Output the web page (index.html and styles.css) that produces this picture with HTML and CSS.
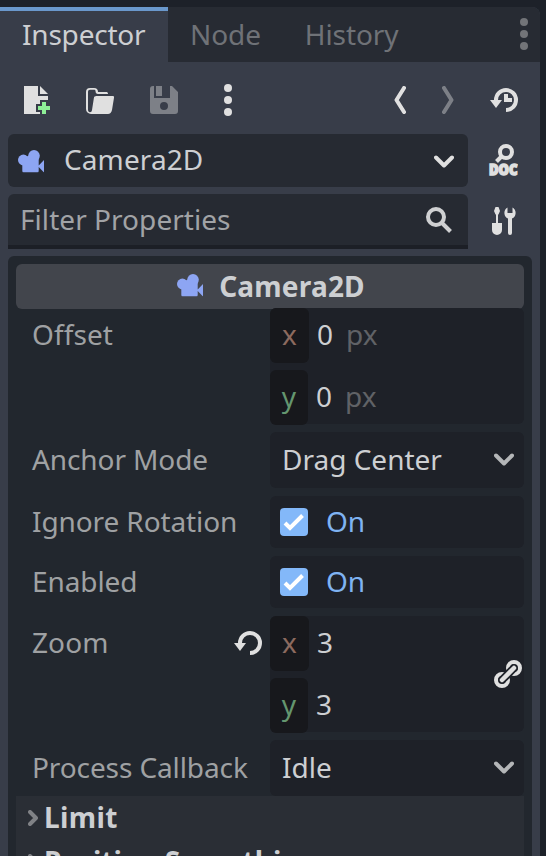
FILE: index.html
```
<!DOCTYPE html>
<html lang="en">
<head>
<meta charset="utf-8">
<title>Inspector</title>
<link rel="stylesheet" href="styles.css">
</head>
<body>
<svg width="0" height="0" class="defs">
  <symbol id="camera" viewBox="0 0 26 22.500"><circle cx="5.400" cy="10" r="5.400"/><circle cx="16" cy="5.800" r="5.800"/><path d="M4.300 9L12 5h8.700v16a1.500 1.500 0 0 1-1.500 1.500H5.800A1.500 1.500 0 0 1 4.300 21zM20 16.300l6-6.300v12.500z"/></symbol>
  <symbol id="down" viewBox="0 0 20 14"><path d="M2 2.500l8 8 8-8" class="line"/></symbol>
  <symbol id="right" viewBox="0 0 10 16"><path d="M2 2l6 6-6 6" class="line"/></symbol>
  <symbol id="dots" viewBox="0 0 8 32"><circle cx="4" cy="4" r="4"/><circle cx="4" cy="16" r="4"/><circle cx="4" cy="28" r="4"/></symbol>
  <symbol id="check" viewBox="0 0 28 28"><path d="M5 15l5 5L22.500 7.500" fill="none" stroke="#fff" stroke-width="4"/></symbol>
</svg>
<div class="dock">
  <nav class="tabs">
    <div class="tab active">Inspector</div>
    <div class="tab">Node</div>
    <div class="tab">History</div>
    <svg class="tab-menu" width="8" height="32"><use href="#dots"/></svg>
  </nav>
  <div class="toolbar">
    <svg width="32" height="32" viewBox="0 0 16 16"><path d="M2 1v14h8v-1H8v-4h2V8h4V6H9V1zM10 1v4h4z"/><path d="M11 9h2v2h2v2h-2v2h-2v-2H9v-2h2z" fill="#8eef97"/></svg>
    <svg width="32" height="32" viewBox="0 0 16 16"><path d="M3 2a2 2 0 0 0-2 2v8.500A2.500 2.500 0 0 0 3.500 15H12c1 0 1.700-.6 2-2l1-6.100c.1-.6-.1-.9-.7-.9H6.300c-.9 0-1.300.4-1.400 1.200L4 13c-.1.800-.5 1.100-1 1.100-.6 0-1-.5-1-1.100V4c0-.7.4-1.100 1-1.100h2c.6 0 .8.3.8.9 0 .8.400 1.200 1.200 1.200h5c0-.7-.3-1-1-1H7c0-1.300-.7-2-2-2z"/></svg>
    <svg class="off" width="32" height="32" viewBox="0 0 16 16"><path fill-rule="evenodd" d="M2.500 1H3v6h8V1h1l3 3v9.500a1.500 1.500 0 0 1-1.500 1.500h-11A1.500 1.500 0 0 1 1 13.500v-11A1.500 1.500 0 0 1 2.500 1zM4 1h3v5H4zM8 9a2 2 0 1 0 0 4 2 2 0 0 0 0-4z"/></svg>
    <svg class="menu" width="8" height="32"><use href="#dots"/></svg>
    <svg class="back" width="12" height="28" viewBox="0 0 12 28"><path class="line" d="M10 2L2.500 14 10 26"/></svg>
    <svg class="next" width="12" height="28" viewBox="0 0 12 28"><path class="line" d="M2 2l7.500 12L2 26"/></svg>
    <svg width="28" height="24" viewBox="0 0 28 24"><path d="M16 22A10 10 0 1 0 6 12" fill="none" stroke="#e0e0e0" stroke-width="4"/><path d="M0 12h12l-6 8zM14 6h4v4h4v4h-8z"/></svg>
  </div>
  <div class="object-row">
    <div class="box object">
      <svg class="cam" width="26" height="22.500"><use href="#camera"/></svg>
      <span>Camera2D</span>
      <svg class="end" width="20" height="14"><use href="#down"/></svg>
    </div>
    <svg class="side" width="30" height="40" viewBox="0 -3 30 40"><circle cx="18" cy="8" r="6" fill="none" stroke="#e0e0e0" stroke-width="4"/><path d="M13.500 12.500L8.500 17.500" fill="none" stroke="#e0e0e0" stroke-width="4"/><text x="1" y="31" textLength="28.500" lengthAdjust="spacingAndGlyphs" class="doc">DOC</text></svg>
  </div>
  <div class="object-row filter-row">
    <div class="box filter">
      <span>Filter Properties</span>
      <svg class="end" width="28" height="28" viewBox="0 0 28 28"><circle cx="11" cy="11" r="8" fill="none" stroke="#cfd0d2" stroke-width="4"/><path d="M17 17l8.500 8.500" fill="none" stroke="#cfd0d2" stroke-width="4"/></svg>
    </div>
    <svg class="side tools" width="24" height="28" viewBox="0 0 24 28"><path d="M3.500 0h3L8 4 6.500 7.500H6V16h4v7a5 5 0 0 1-10 0v-7h4V7.500h-.5L2 4zM15.500.5V6h5V.5A6.200 6.200 0 0 1 20 11.500V26a2 2 0 0 1-4 0V11.500A6.200 6.200 0 0 1 15.500.5z"/></svg>
  </div>
  <main class="properties">
    <div class="category"><svg class="cam" width="26" height="22.500"><use href="#camera"/></svg><span>Camera2D</span></div>
    <div class="prop vector first">
      <label>Offset</label>
      <div class="field">
        <div class="axis"><b class="x">x</b><span>0</span><i>px</i></div>
        <div class="axis"><b class="y">y</b><span>0</span><i>px</i></div>
      </div>
    </div>
    <div class="prop">
      <label>Anchor Mode</label>
      <div class="field select"><span>Drag Center</span><svg class="end dim" width="20" height="14"><use href="#down"/></svg></div>
    </div>
    <div class="prop">
      <label>Ignore Rotation</label>
      <div class="field toggle"><svg class="checkbox" width="28" height="28"><use href="#check"/></svg><span>On</span></div>
    </div>
    <div class="prop">
      <label>Enabled</label>
      <div class="field toggle"><svg class="checkbox" width="28" height="28"><use href="#check"/></svg><span>On</span></div>
    </div>
    <div class="prop vector">
      <label>Zoom <svg class="revert" width="28" height="24" viewBox="0 0 28 24"><path d="M16 22A10 10 0 1 0 6 12" fill="none" stroke="#e0e0e0" stroke-width="4"/><path d="M0 12h12l-6 8z"/></svg></label>
      <div class="field linked">
        <div>
          <div class="axis"><b class="x">x</b><span>3</span></div>
          <div class="axis"><b class="y">y</b><span>3</span></div>
        </div>
        <svg class="link" width="28" height="28" viewBox="0 0 28 28"><g fill="none" stroke="#e0e0e0"><circle cx="20" cy="8" r="6" stroke-width="4"/><circle cx="8" cy="20" r="6" stroke-width="4"/><path d="M8.500 19.500l11-11" stroke="#1e2128" stroke-width="8" stroke-linecap="round"/><path d="M8 20L20 8" stroke-width="4.500" stroke-linecap="round"/></g></svg>
      </div>
    </div>
    <div class="prop">
      <label>Process Callback</label>
      <div class="field select"><span>Idle</span><svg class="end dim" width="20" height="14"><use href="#down"/></svg></div>
    </div>
    <div class="sections">
      <div class="section"><svg width="10" height="16"><use href="#right"/></svg><span class="short">Limit</span></div>
      <div class="section"><svg width="10" height="16"><use href="#right"/></svg><span>Position Smoothing</span></div>
    </div>
  </main>
</div>
</body>
</html>
```

FILE: styles.css
```
* { box-sizing: border-box; }
body {
  margin: 0;
  height: 856px;
  overflow: hidden;
  background: #1d2129;
  font: 28px/44px "Noto Sans", sans-serif;
  color: #cdcfd2;
}
.defs { display: none; }
svg { display: block; flex: none; fill: #e0e0e0; }
.line { fill: none; stroke: currentColor; stroke-width: 4; stroke-linecap: round; stroke-linejoin: round; }
.dock {
  width: 540px;
  height: 849px;
  margin-top: 7px;
  background: #383d49;
  border-top-right-radius: 8px;
  overflow: hidden;
}
.tabs { display: flex; height: 55px; background: #272b33; }
.tab { padding: 5px 22px 0; color: #6f7277; letter-spacing: -0.1px; }
.tab.active { width: 168px; padding-top: 1px; border-top: 4px solid #6a98cc; background: #383d49; color: #cdcfd2; letter-spacing: -0.2px; }
.tab-menu { margin: 11px 12px 0 auto; fill: #727478; }
.toolbar { display: flex; align-items: center; height: 76px; padding: 0 22px 0 20px; gap: 32px; color: #e0e0e0; }
.off { fill: #7d8087; }
.menu { margin-left: 12px; }
.back { margin-left: auto; }
.next { margin: 0 4px; color: #7d8087; }
.object-row { display: flex; align-items: center; margin: -4px 0 7px 8px; height: 53px; }
.box { display: flex; align-items: center; width: 460px; height: 53px; background: #262a32; border-radius: 6px; }
.object { padding: 0 14px 0 10px; color: #cdcfd2; }
.object span { margin: -4px 0 0 20px; letter-spacing: 0.1px; }
.object .end { margin-top: 3px; color: #e0e0e0; }
.cam { fill: #8da5f3; }
.object .cam { margin-top: 2px; }
.end { margin-left: auto; }
.side { margin-left: 20px; }
.doc { font: 900 15px/1 "Noto Sans", sans-serif; stroke: #e0e0e0; stroke-width: 1.6px; }
.filter-row { height: 55px; margin: 0 0 7px 8px; }
.filter { height: 55px; padding: 0 15px 0 12px; border-bottom: 4px solid #1c1f26; border-radius: 6px 6px 0 0; color: #a1a3a6; }
.filter span { margin-top: -2px; letter-spacing: 0.05px; }
.tools { margin: -1px 0 0 24px; }
.properties { margin: 0 8px; height: 600px; padding: 8px; background: #22272e; border-radius: 6px 6px 0 0; }
.category {
  display: flex;
  align-items: center;
  justify-content: center;
  gap: 16px;
  height: 45px;
  padding: 0 0 2px 2px;
  background: #42454c;
  border-radius: 6px;
  font-weight: 700;
  letter-spacing: 0.2px;
}
.prop { display: flex; margin-bottom: 8px; }
.prop label { display: flex; justify-content: space-between; width: 254px; padding: 5px 8px 0 16px; color: #9fa1a3; letter-spacing: -0.1px; }
.first { margin-top: -1px; }
.field { width: 254px; background: #1e2128; border-radius: 6px; }
.vector .field { height: 116px; }
.vector label { padding-top: 4px; letter-spacing: 0.1px; }
.axis { display: flex; height: 55px; line-height: 52px; margin-bottom: 7px; }
.axis b { width: 39px; height: 55px; background: #17181c; border-radius: 6px; text-align: center; font-weight: 400; margin-right: 8px; line-height: 53px; }
.axis .y { width: 38px; }
.x { color: #8c6a5f; }
.y { color: #64966f; }
.axis i { font-style: normal; margin-left: 13px; color: #606266; }
.select { display: flex; align-items: center; height: 56px; padding: 0 10px 0 12px; }
.select span { margin-top: -2px; }
.dim { color: #b4b6b8; }
.toggle { display: flex; align-items: center; height: 52px; padding-left: 10px; gap: 18px; color: #7fb3f2; }
.toggle span { margin-top: -3px; }
.prop:has(.toggle) label { padding-top: 3px; }
.checkbox { background: #83b8f9; border-radius: 4px; }
.revert { margin-top: 11px; }
.linked { display: flex; justify-content: space-between; align-items: center; padding-right: 2px; }
.linked > div { height: 116px; }
.sections { margin-top: -8px; background: #2a2e35; height: 70px; }
.section { display: flex; align-items: center; gap: 6px; height: 44px; padding-left: 12px; font-weight: 700; color: #cdcfd2; }
.section span { margin-top: -2px; }
.short { letter-spacing: 0.4px; }
.section svg { color: #808286; }
```
